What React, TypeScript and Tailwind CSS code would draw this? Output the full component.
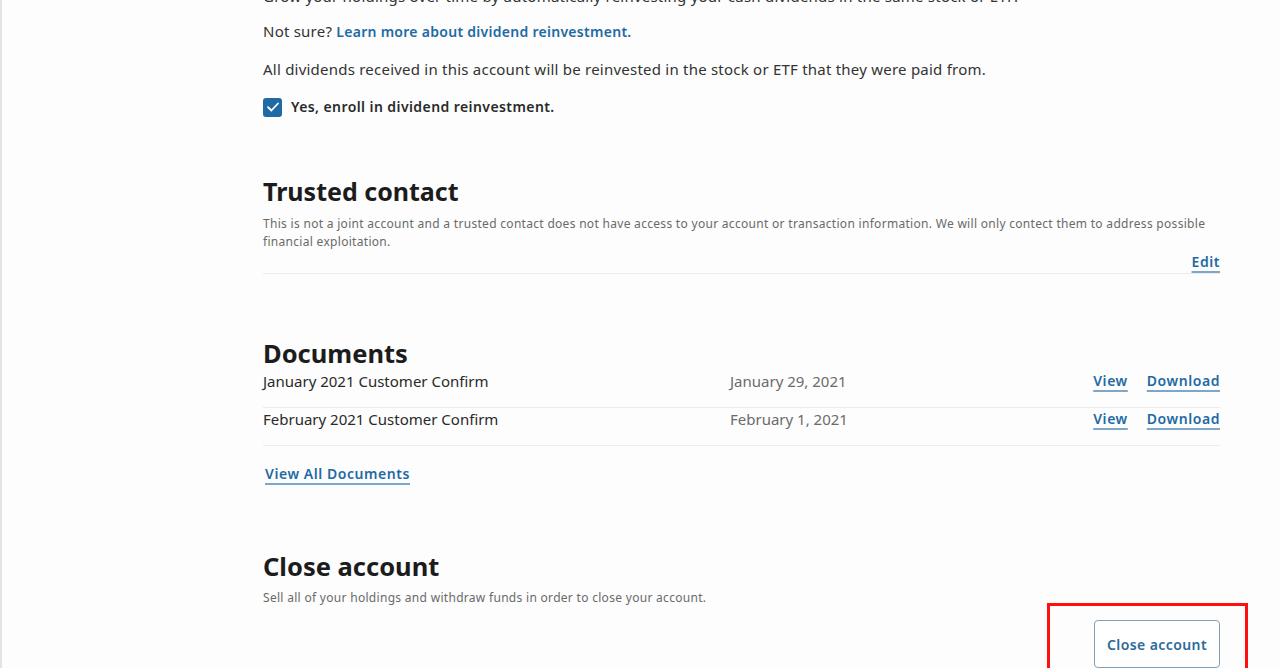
import React from "react";

const docs = [
  { name: "January 2021 Customer Confirm", date: "January 29, 2021" },
  { name: "February 2021 Customer Confirm", date: "February 1, 2021" },
];

function Check() {
  return (
    <span className="flex h-[19px] w-[19px] items-center justify-center rounded-[3px] bg-[#1f6aa5]">
      <svg width="14" height="14" viewBox="0 0 14 14" fill="none">
        <path d="M2 7.2 5.4 10.5 12 3.5" stroke="#fff" strokeWidth="1.8" strokeLinecap="round" strokeLinejoin="round" />
      </svg>
    </span>
  );
}

function Link({ children }: { children: React.ReactNode }) {
  return (
    <a className="cursor-pointer font-semibold tracking-[0.04em] text-[#1f6aa5] underline decoration-[#7ea6c8] decoration-[1.5px] underline-offset-[4px]">
      {children}
    </a>
  );
}

export default function App() {
  return (
    <div
      className="relative h-[668px] overflow-hidden border-l-2 border-[#e2e3e2] bg-[#fcfdfc] text-[#262626]"
      style={{ fontFamily: '"Noto Sans", "Open Sans", sans-serif' }}
    >
      <div className="ml-[261px] w-[957px]">
        {/* dividend reinvestment */}
        <p className="-mt-[15px] text-[15px] leading-[22px] tracking-[0.015em] text-[#333]">
          Grow your holdings over time by automatically reinvesting your cash dividends in the same stock or ETF.
        </p>
        <p className="mt-[13px] text-[15px] leading-[22px] tracking-[0.015em] text-[#333]">
          Not sure?{" "}
          <a className="text-[14px] font-semibold tracking-[0.02em] text-[#1f6aa5]">
            Learn more about dividend reinvestment.
          </a>
        </p>
        <p className="mt-[15px] text-[15px] leading-[22px] tracking-[0.015em] text-[#333]">
          All dividends received in this account will be reinvested in the stock or ETF that they were paid from.
        </p>
        <label className="mt-[16px] flex items-center gap-[9px] text-[14px] font-semibold leading-[22px] tracking-[0.03em] text-[#2a2a2a]">
          <Check />
          Yes, enroll in dividend reinvestment.
        </label>

        {/* trusted contact */}
        <h2 className="mt-[57px] text-[25px] font-bold leading-[32px] text-[#1c1c1c]">Trusted contact</h2>
        <p className="mt-[8px] text-[12px] leading-[18px] tracking-[0.025em] text-[#6a6a6a]">
          This is not a joint account and a trusted contact does not have access to your account or transaction
          information. We will only contect them to address possible financial exploitation.
        </p>
        <div className="flex h-[23px] items-start justify-end border-b border-[#ececec] text-[14px] leading-[22px]">
          <Link>Edit</Link>
        </div>

        {/* documents */}
        <h2 className="mt-[63px] text-[25.5px] font-bold leading-[32px] text-[#1c1c1c]">Documents</h2>
        <div className="mt-px">
          {docs.map((d) => (
            <div
              key={d.name}
              className="grid grid-cols-[467px_1fr_auto] border-b border-[#ececec] pb-[15px] text-[15px] leading-[22px]"
            >
              <span className="text-[#2a2a2a]">{d.name}</span>
              <span className="text-[#6b6b6b]">{d.date}</span>
              <span className="flex gap-[19px] text-[14px]">
                <Link>View</Link>
                <Link>Download</Link>
              </span>
            </div>
          ))}
        </div>
        <div className="mt-[17px] pl-[2px] text-[14px] leading-[22px]">
          <Link>View All Documents</Link>
        </div>

        {/* close account */}
        <h2 className="mt-[65px] text-[25.5px] font-bold leading-[32px] text-[#1c1c1c]">Close account</h2>
        <p className="mt-[7px] text-[12px] leading-[18px] tracking-[0.025em] text-[#6a6a6a]">
          Sell all of your holdings and withdraw funds in order to close your account.
        </p>
        <div className="mt-[13px] flex justify-end">
          <button className="h-[48px] w-[126px] rounded-[4px] border border-[#7d9fbe] bg-white text-[14px] font-semibold tracking-[0.03em] text-[#2d6a9a]">
            Close account
          </button>
        </div>
      </div>

      {/* highlight frame around the close button */}
      <div className="pointer-events-none absolute left-[1045px] top-[603px] h-[80px] w-[201px] border-[3px] border-[#ff1010]" />
    </div>
  );
}
